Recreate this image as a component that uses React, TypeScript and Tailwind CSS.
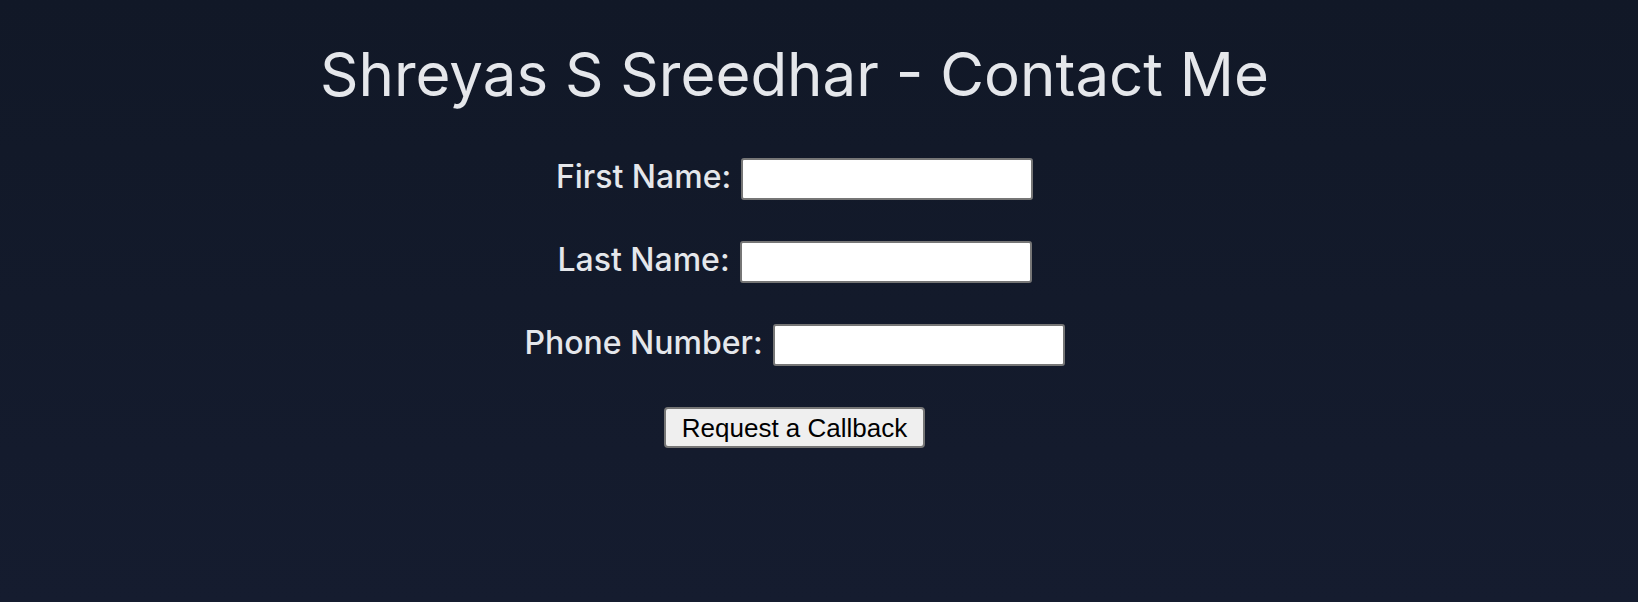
export default function App() {
  const fields = [
    { id: "first", label: "First Name:" },
    { id: "last", label: "Last Name:" },
    { id: "phone", label: "Phone Number:" },
  ];

  return (
    <div className="min-h-[602px] w-full bg-gradient-to-b from-[#111827] to-[#151c2f] pr-[49px] font-['Inter',sans-serif] text-[#e5e7eb]">
      <div className="flex flex-col items-center">
        <h1 className="mt-[44px] text-[60px] font-normal leading-none">
          Shreyas S Sreedhar - Contact Me
        </h1>

        <form
          className="mt-[54px] flex flex-col items-center gap-[41px]"
          onSubmit={(e) => e.preventDefault()}
        >
          {fields.map((f) => (
            <div key={f.id} className="flex items-center gap-[10px]">
              <label htmlFor={f.id} className="mb-[4px] text-[32px] font-medium leading-none">
                {f.label}
              </label>
              <input
                id={f.id}
                type="text"
                className="h-[42px] w-[292px] rounded-[3px] border-2 border-[#767676] bg-white text-black"
              />
            </div>
          ))}

          <button
            type="submit"
            className="h-[41px] rounded-[4px] border-2 border-[#767676] bg-[#efefef] px-[16px] font-['Liberation_Sans',Arial,sans-serif] text-[26px] leading-none text-black"
          >
            Request a Callback
          </button>
        </form>
      </div>
    </div>
  );
}
